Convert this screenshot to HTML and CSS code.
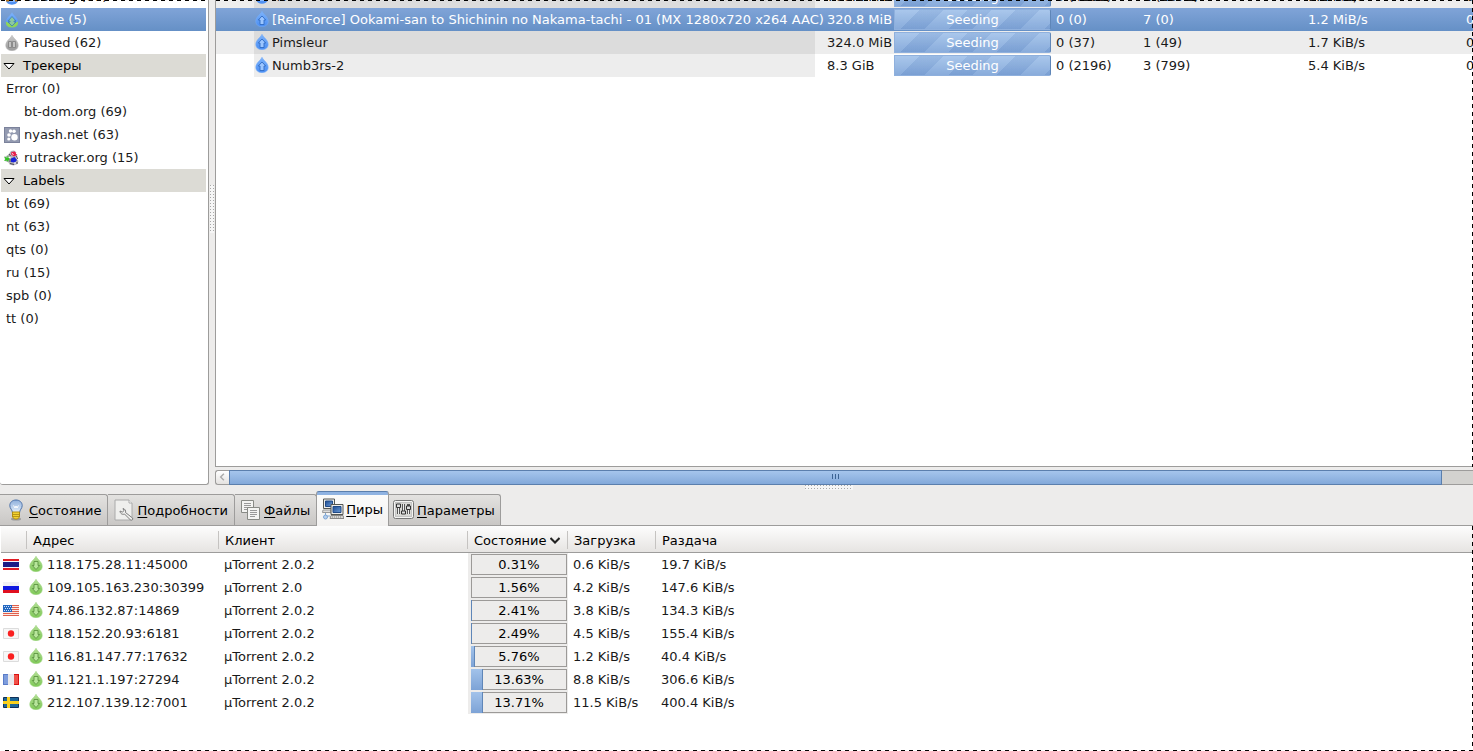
FILE: index.html
```html
<!DOCTYPE html>
<html lang="ru">
<head>
<meta charset="utf-8">
<title>Deluge</title>
<link rel="stylesheet" href="styles.css">
</head>
<body>
<svg class="defs" aria-hidden="true">
  <defs>
    <linearGradient id="blue" x1="0" y1="0" x2="0" y2="1"><stop offset="0" stop-color="#7db3fb"/><stop offset="1" stop-color="#4a8df2"/></linearGradient>
    <linearGradient id="green" x1="0" y1="0" x2="0" y2="1"><stop offset="0" stop-color="#b2dd94"/><stop offset="1" stop-color="#7fc958"/></linearGradient>
    <linearGradient id="grey" x1="0" y1="0" x2="0" y2="1"><stop offset="0" stop-color="#c9c9c9"/><stop offset="1" stop-color="#9a9a9a"/></linearGradient>
    <linearGradient id="bulb" x1="0" y1="0" x2="0" y2="1"><stop offset="0" stop-color="#8fb0dc"/><stop offset="1" stop-color="#e6f0fa"/></linearGradient>
    <linearGradient id="screen" x1="0" y1="0" x2="1" y2="1"><stop offset="0" stop-color="#1d4c92"/><stop offset="1" stop-color="#6b9bd8"/></linearGradient>
    <path id="drop" d="M8 .3C9.500 3.500 14.200 6 14.200 10.300 14.200 13.600 11.500 15.700 8 15.700S1.800 13.600 1.800 10.300C1.800 6 6.500 3.500 8 .3z"/>
  </defs>
  <symbol id="i-up" viewBox="0 0 16 16"><use href="#drop" fill="url(#blue)" stroke="#74adfa" stroke-width=".6"/><path d="M8 5l3.700 4H10v4.500H6V9H4.300z" fill="#9cc6ff" stroke="#2f6bc4" stroke-width=".9"/></symbol>
  <symbol id="i-down" viewBox="0 0 16 16"><use href="#drop" fill="url(#green)" stroke="#9bd47c" stroke-width=".6"/><path d="M8 13.500L4.300 9.500H6v-4h4v4h1.700z" fill="#b7e59b" stroke="#5c9442" stroke-width=".9"/></symbol>
  <symbol id="i-active" viewBox="0 0 16 16"><use href="#drop" fill="url(#blue)"/><path d="M2 9.500l6 3 6-3c.6 4-2 6-6 6s-6.600-2-6-6z" fill="#8fd45a"/><path d="M8 4.500L12 9h-2v1h2l-4 4-4-4h2V9H4z" fill="#8cc8a0" stroke="#3a7cb8" stroke-width=".8"/></symbol>
  <symbol id="i-paused" viewBox="0 0 16 16"><use href="#drop" fill="url(#grey)" stroke="#b4b4b4" stroke-width=".6"/><path d="M4.500 6.500h3v6h-3zM8.500 6.500h3v6h-3z" fill="#c4c4c4" stroke="#808080" stroke-width=".8"/></symbol>
  <symbol id="i-mix" viewBox="0 0 16 16"><use href="#drop" fill="url(#blue)"/><path d="M2 8h12v4.500H2z" fill="#b8741c"/><path d="M5 9.500h6v3.500H5z" fill="#8cbcff"/></symbol>
</svg>

<div class="window">
  <section class="upper">
    <aside class="sidebar">
      <ul class="filters">
        <li class="row"><svg class="ico"><use href="#i-mix"/></svg>Seeding (67)</li>
        <li class="row selected"><svg class="ico"><use href="#i-active"/></svg>Active (5)</li>
        <li class="row"><svg class="ico"><use href="#i-paused"/></svg>Paused (62)</li>
        <li><button class="row group" type="button"><svg class="tri" viewBox="0 0 12 8"><path d="M1 1.500h10L6 7z" fill="#fff" stroke="#000"/></svg>Трекеры</button></li>
        <li class="row">Error (0)</li>
        <li class="row noicon">bt-dom.org (69)</li>
        <li class="row"><svg class="ico" viewBox="0 0 16 16"><path d="M0 0h16v16H0z" fill="#7b829b"/><path d="M1 1h14v14H1z" fill="#939ab0"/><g fill="#fff"><circle cx="10.500" cy="10.300" r="3.200"/><circle cx="5" cy="8" r="1.800"/><circle cx="4.800" cy="12" r="1.600"/><circle cx="6.500" cy="4" r="1.700"/><circle cx="10" cy="4.300" r="1.800"/></g></svg>nyash.net (63)</li>
        <li class="row"><svg class="ico" viewBox="0 0 16 16"><path d="M7 1l3-.5 2 1.500 1.500 3L12 8l2.500 3-1 3-4 1.500-4-1-1-2L1 11l-.5-4L4 5z" fill="#b5b3b9"/><path d="M0 6.500L3.500 8V5.500L5.500 8l-1.500 4-1-1.500L0 11l1.500-2z" fill="#30c520"/><path d="M7.500 2l3.500-.5 2 3.500-3 1.500L7 4.500z" fill="#e8204c"/><path d="M7 8.500l3.500-1.500L13 10l-2 2.500-4-.5z" fill="#1822d8"/><path d="M5 4l1.500 2M6 9v3M12.500 6l1 3M6 13.500l4 1M13 12v2" stroke="#4a4658" fill="none"/><path d="M8 3.500l1.500 1M4.500 7.500h2M10 13h2M12 3.500h1.500" stroke="#fff" fill="none"/></svg>rutracker.org (15)</li>
        <li><button class="row group" type="button"><svg class="tri" viewBox="0 0 12 8"><path d="M1 1.500h10L6 7z" fill="#fff" stroke="#000"/></svg>Labels</button></li>
        <li class="row">bt (69)</li>
        <li class="row">nt (63)</li>
        <li class="row">qts (0)</li>
        <li class="row">ru (15)</li>
        <li class="row">spb (0)</li>
        <li class="row">tt (0)</li>
      </ul>
    </aside>
    <div class="vsplit"><i class="grip"></i></div>
    <main class="main">
      <div class="view">
        <table class="torrents">
          <colgroup><col class="t-num"><col class="t-name"><col class="t-size"><col class="t-bar"><col class="t-seeds"><col class="t-peers"><col class="t-up"><col></colgroup>
          <tbody>
            <tr class="odd"><td></td><td class="name"><svg class="ico"><use href="#i-mix"/></svg>nt</td><td>700.1 MiB</td><td class="barcell"><div class="bar">Seeding</div></td><td>0 (4281)</td><td>1 (1371)</td><td>1.2 KiB/s</td><td class="last">0.0</td></tr>
            <tr class="selected"><td></td><td class="name"><svg class="ico"><use href="#i-up"/></svg>[ReinForce] Ookami-san to Shichinin no Nakama-tachi - 01 (MX 1280x720 x264 AAC)</td><td>320.8 MiB</td><td class="barcell"><div class="bar">Seeding</div></td><td>0 (0)</td><td>7 (0)</td><td>1.2 MiB/s</td><td class="last">0.0</td></tr>
            <tr class="odd"><td></td><td class="name"><svg class="ico"><use href="#i-up"/></svg>Pimsleur</td><td>324.0 MiB</td><td class="barcell"><div class="bar">Seeding</div></td><td>0 (37)</td><td>1 (49)</td><td>1.7 KiB/s</td><td class="last">0.0</td></tr>
            <tr><td></td><td class="name"><svg class="ico"><use href="#i-up"/></svg>Numb3rs-2</td><td>8.3 GiB</td><td class="barcell"><div class="bar">Seeding</div></td><td>0 (2196)</td><td>3 (799)</td><td>5.4 KiB/s</td><td class="last">0.0</td></tr>
          </tbody>
        </table>
      </div>
      <div class="scroll">
        <button class="step" type="button" aria-label="Влево"><svg viewBox="0 0 14 13"><path d="M8.500 3L5 6.500l3.500 3.500" fill="none" stroke="#aaa" stroke-width="1.500"/></svg></button>
        <div class="thumb"><svg viewBox="0 0 8 6"><path d="M.5 0v5M3.500 0v5M6.500 0v5" stroke="#3c6393"/></svg></div>
        <div class="trough"></div>
      </div>
    </main>
    <i class="dash-top-a"></i><i class="dash-top-b"></i><i class="dash-side"></i>
  </section>

  <div class="hsplit"><i class="grip"></i></div>

  <nav class="tabs" role="tablist">
    <button class="tab t1" type="button" role="tab"><svg width="16" height="22" viewBox="0 0 16 22"><ellipse cx="8" cy="20" rx="5" ry="1.500" fill="#999"/><path d="M8 1c3.800 0 6.200 2.500 6.200 5.600 0 3-2.700 4.200-2.700 7.400h-7C4.500 10.800 1.800 9.600 1.800 6.600 1.800 3.500 4.200 1 8 1z" fill="url(#bulb)" stroke="#4a70a8"/><path d="M5.500 6.500L7 9l1-2 1 2 1.500-2.500" fill="none" stroke="#fff"/><path d="M4.500 13h7v5l-2 2h-3l-2-2z" fill="#f2d232" stroke="#b08c10"/><path d="M5 15.500h6M5 17.500h6" stroke="#b89618"/></svg><span><u>С</u>остояние</span></button>
    <button class="tab t2" type="button" role="tab"><svg width="20" height="22" viewBox="0 0 20 22"><path d="M1 1h14l3 3v17H1z" fill="#efefed" stroke="#aaa"/><path d="M15 1v3h3" fill="#fff" stroke="#aaa"/><path d="M9 9.500c2 .5 3 2 2.500 4l7 5.500c1 1.500-.5 2.500-2 2L10.500 15c-2 1-4.500-.5-4.500-3l2.500 1.200 1.300-1.500z" fill="#f0f0ee" stroke="#7d7d7d"/></svg><span><u>П</u>одробности</span></button>
    <button class="tab t3" type="button" role="tab"><svg width="20" height="20" viewBox="0 0 20 20"><path d="M.5.5h12v12H.5z" fill="#f4f4f2" stroke="#888a85"/><path d="M3 3.500h7M3 5.500h7M3 7.500h7M3 9.500h5" stroke="#999"/><path d="M6.500 7.500h12v12h-12z" fill="#f4f4f2" stroke="#888a85"/><path d="M9 10.500h7M9 12.500h7M9 14.500h7M9 16.500h5" stroke="#999"/></svg><span><u>Ф</u>айлы</span></button>
    <button class="tab t4 active" type="button" role="tab" aria-selected="true"><svg width="22" height="22" viewBox="0 0 22 22"><path d="M1.500 1h11v9.500h-11z" fill="#eeeeec" stroke="#555753"/><path d="M3.500 3h7v5.500h-7z" fill="url(#screen)" stroke="#204a87"/><path d="M1 12h8v2.500H.5z" fill="#ddd" stroke="#999"/><path d="M9 6.500h12v10H9z" fill="#eeeeec" stroke="#555753"/><path d="M11 8.500h8v6h-8z" fill="url(#screen)" stroke="#204a87"/><path d="M9 17.500h12l1 3H8z" fill="#d8d8d5" stroke="#888"/><path d="M10 19h10" stroke="#888" stroke-dasharray="1 1"/><path d="M3.500 15v3H8" fill="none" stroke="#7ea6d4"/><circle cx="3.500" cy="19" r="2" fill="#b7d0ee" stroke="#7ea6d4"/></svg><span><u>П</u>иры</span></button>
    <button class="tab t5" type="button" role="tab"><svg width="21" height="20" viewBox="0 0 21 20"><rect x=".5" y=".5" width="20" height="18" rx="2" fill="#f4f4f2" stroke="#777"/><rect x="2.500" y="2.500" width="16" height="14" fill="#d8d8d5" stroke="#c4c4c4"/><path d="M5.500 4v10M10.500 4v10M15.500 4v10" stroke="#555" stroke-width="3"/><path d="M5.500 7v7M10.500 4v7M15.500 9v5" stroke="#eee"/><path d="M3.500 4h4v3.500h-4zM8.500 11h4v3h-4zM13.500 6h4v3.500h-4z" fill="#ddd" stroke="#333"/></svg><span><u>П</u>араметры</span></button>
  </nav>

  <section class="lower">
    <table class="peers">
      <colgroup><col class="p-flag"><col class="p-addr"><col class="p-client"><col class="p-state"><col class="p-down"><col></colgroup>
      <thead><tr><th aria-label="Страна"></th><th>Адрес</th><th>Клиент</th><th>Состояние<svg class="sort" viewBox="0 0 10 7"><path d="M.5 1l4.500 4.500L9.500 1" fill="none" stroke="#222" stroke-width="2"/></svg></th><th>Загрузка</th><th>Раздача</th></tr></thead>
      <tbody>
        <tr><td><svg class="flag" viewBox="0 0 16 11"><path d="M0 0h16v11H0z" fill="#e01c24"/><path d="M0 2h16v7H0z" fill="#f4f4fa"/><path d="M0 3h16v5H0z" fill="#1c1c86"/></svg></td><td><svg class="ico"><use href="#i-down"/></svg>118.175.28.11:45000</td><td>µTorrent 2.0.2</td><td class="state"><div class="meter"><i style="width:0%"></i><span>0.31%</span></div></td><td>0.6 KiB/s</td><td>19.7 KiB/s</td></tr>
        <tr><td><svg class="flag" viewBox="0 0 16 11"><path d="M0 0h16v4H0z" fill="#f0f0f4"/><path d="M0 4h16v4H0z" fill="#1018e0"/><path d="M0 8h16v3H0z" fill="#e01020"/></svg></td><td><svg class="ico"><use href="#i-down"/></svg>109.105.163.230:30399</td><td>µTorrent 2.0</td><td class="state"><div class="meter"><i style="width:0%"></i><span>1.56%</span></div></td><td>4.2 KiB/s</td><td>147.6 KiB/s</td></tr>
        <tr><td><svg class="flag" viewBox="0 0 16 11"><path d="M0 0h16v11H0z" fill="#fbe9e4"/><path d="M0 .5h16M0 2.500h16M0 4.500h16M0 6.500h16M0 8.500h16M0 10.500h16" stroke="#e0604c"/><path d="M0 0h9v7H0z" fill="#2468c0"/><path d="M1 1.500h8M2 3.500h7M1 5.500h8" stroke="#cfe0f8" stroke-dasharray="1 1"/></svg></td><td><svg class="ico"><use href="#i-down"/></svg>74.86.132.87:14869</td><td>µTorrent 2.0.2</td><td class="state"><div class="meter"><i style="width:1%"></i><span>2.41%</span></div></td><td>3.8 KiB/s</td><td>134.3 KiB/s</td></tr>
        <tr><td><svg class="flag" viewBox="0 0 16 11"><path d="M.5.5h15v10H.5z" fill="#f7f7f7" stroke="#dcdcdc"/><circle cx="8" cy="5.500" r="3.200" fill="#fa2020"/></svg></td><td><svg class="ico"><use href="#i-down"/></svg>118.152.20.93:6181</td><td>µTorrent 2.0.2</td><td class="state"><div class="meter"><i style="width:1%"></i><span>2.49%</span></div></td><td>4.5 KiB/s</td><td>155.4 KiB/s</td></tr>
        <tr><td><svg class="flag" viewBox="0 0 16 11"><path d="M.5.5h15v10H.5z" fill="#f7f7f7" stroke="#dcdcdc"/><circle cx="8" cy="5.500" r="3.200" fill="#fa2020"/></svg></td><td><svg class="ico"><use href="#i-down"/></svg>116.81.147.77:17632</td><td>µTorrent 2.0.2</td><td class="state"><div class="meter"><i style="width:4%"></i><span>5.76%</span></div></td><td>1.2 KiB/s</td><td>40.4 KiB/s</td></tr>
        <tr><td><svg class="flag" viewBox="0 0 16 11"><path d="M0 0h16v11H0z" fill="#e8e8ec"/><path d="M0 0h5v11H0z" fill="#7d9cdc"/><path d="M11 0h5v11h-5z" fill="#f05048"/><path d="M.5 0v11M0 .5h5M0 10.500h5" stroke="#5a7cc8"/><path d="M15.500 0v11M11 .5h5M11 10.500h5" stroke="#d81010"/></svg></td><td><svg class="ico"><use href="#i-down"/></svg>91.121.1.197:27294</td><td>µTorrent 2.0.2</td><td class="state"><div class="meter"><i style="width:13%"></i><span>13.63%</span></div></td><td>8.8 KiB/s</td><td>306.6 KiB/s</td></tr>
        <tr><td><svg class="flag" viewBox="0 0 16 11"><path d="M.5.5h15v10H.5z" fill="#1c6698" stroke="#103058"/><path d="M4 0h3v11H4zM0 4h16v3H0z" fill="#fad01c"/></svg></td><td><svg class="ico"><use href="#i-down"/></svg>212.107.139.12:7001</td><td>µTorrent 2.0.2</td><td class="state"><div class="meter"><i style="width:13%"></i><span>13.71%</span></div></td><td>11.5 KiB/s</td><td>400.4 KiB/s</td></tr>
      </tbody>
    </table>
    <i class="dash-bottom"></i><i class="dash-side"></i>
  </section>
</div>
</body>
</html>
```
FILE: styles.css
```css
* { box-sizing: border-box; }
body {
  margin: 0;
  font: 13px/23px "DejaVu Sans", sans-serif;
  color: #1a1a1a;
  background: #edeceb;
}
button { font: inherit; color: #000; border: 0; background: none; padding: 0; margin: 0; text-align: left; }
svg { flex: none; display: block; }
.defs { position: absolute; width: 0; height: 0; }
.window { height: 100vh; display: flex; flex-direction: column; overflow: hidden; }
.upper { flex: 1; min-height: 0; display: flex; position: relative; }

/* Filter sidebar */
.sidebar {
  width: 209px;
  flex: none;
  background: #fff;
  border: solid #9d9c9b;
  border-width: 0 1px 1px 0;
  border-radius: 0 0 3px 3px;
  padding: 0 2px 0 1px;
  overflow: hidden;
}
.filters { list-style: none; margin: -15px 0 0; padding: 0; }
.row { height: 23px; display: flex; align-items: center; padding-left: 5px; width: 100%; white-space: nowrap; }
.ico { width: 16px; height: 16px; }
.row .ico { margin: 0 4px 0 -2px; }
.noicon { padding-left: 23px; }
.group { background: #dcdbd5; padding-left: 2px; }
.tri { width: 12px; height: 8px; margin-right: 8px; }
.selected { background: linear-gradient(#80a4d8, #6590c6); color: #fff; }

/* Pane splitters */
.vsplit { width: 6px; flex: none; display: flex; align-items: center; padding: 0 0 66px 1px; }
.grip { display: block; background: linear-gradient(#aaa, #aaa) 0 0 / 1px 1px, #f6f6f6; background: conic-gradient(from 0deg at 1px 1px, #f6f6f6 0 270deg, #a8a8a8 270deg) 0 0 / 3px 3px; }
.vsplit .grip { width: 4px; height: 48px; }
.hsplit { height: 6px; flex: none; display: flex; justify-content: center; padding-left: 185px; }
.hsplit .grip { width: 48px; height: 5px; }

/* Torrent list */
.main { flex: 1; min-width: 0; display: flex; flex-direction: column; }
.view { flex: 1; min-height: 0; background: #fff; border: solid #9d9c9b; border-width: 0 0 1px 1px; overflow: hidden; }
table { border-collapse: collapse; table-layout: fixed; width: 100%; }
td, th { padding: 0; height: 23px; text-align: left; white-space: nowrap; font-weight: normal; }
.torrents { margin-top: -15px; }
.t-num { width: 38px; }
.t-name { width: 561px; }
.t-size { width: 79px; }
.t-bar { width: 158px; }
.t-seeds { width: 87px; }
.t-peers { width: 165px; }
.t-up { width: 158px; }
.torrents td { padding-left: 4px; }
.torrents td:nth-child(3) { padding-left: 12px; }
.torrents td.name { padding-left: 0; background: #ededed; }
.name .ico { float: left; margin: 3px 2px 0 0; }
.odd { background: #ededed; }
.torrents .odd .name { background: #dcdcdc; }
.torrents .selected .name { background: none; }
.torrents td.barcell { padding: 0 1px 0 0; }
.torrents td.last { overflow: hidden; text-overflow: clip; }
.bar {
  height: 21px;
  line-height: 19px;
  text-align: center;
  color: #fff;
  border: 1px solid #8fb0dd;
  border-right: 1px solid #5f86b8;
  border-radius: 0 2px 2px 0;
  background:
    repeating-linear-gradient(135deg, rgba(255,255,255,.08) 0 17px, rgba(60,90,150,.08) 17px 34px),
    linear-gradient(#a2c2ea, #7fa5d8);
}

/* Horizontal scrollbar */
.scroll { height: 18px; padding-top: 3px; display: flex; }
.step { width: 14px; border: 1px solid #9d9c9b; border-right: 0; border-radius: 3px 0 0 3px; background: linear-gradient(#fff, #e4e2e0); }
.thumb {
  flex: 1;
  display: flex;
  align-items: center;
  justify-content: center;
  border: 1px solid #5b7fad;
  background: linear-gradient(#a5c5ec, #83a9da);
}
.thumb svg { width: 8px; height: 6px; }
.trough { width: 31px; border: solid #9d9c9b; border-width: 1px 0; background: #d3d2cf; }

/* Tabs */
.tabs { flex: none; height: 35px; display: flex; align-items: flex-end; border-bottom: 1px solid #9d9c9b; }
.tab {
  height: 31px;
  display: flex;
  align-items: center;
  gap: 3px;
  border: solid #9d9c9b;
  border-width: 1px 1px 0 0;
  border-radius: 0 3px 0 0;
  background: linear-gradient(#e3e2e0, #c9c7c5);
}
.tab u { text-underline-offset: 2px; }
.tab span { padding-top: 2px; }
.t1 { padding: 0 6px 0 8px; gap: 5px; }
.t2 { padding: 0 6px; }
.t3 { padding: 0 6px; }
.t4 { padding: 0 5px; }
.t5 { padding: 0 5px 0 4px; }
.tab.active {
  height: 35px;
  margin: 0 0 -1px -1px;
  gap: 2px;
  border: 1px solid #9d9c9b;
  border-top: 1px solid #5b7fad;
  border-bottom: 0;
  border-radius: 3px 3px 0 0;
  background: linear-gradient(#8fb3e2 0 3px, #fbfbfa 3px, #f3f2f1);
}

/* Peers */
.lower { flex: none; position: relative; background: #fff; padding: 0 0 37px 1px; }
.p-flag { width: 26px; }
.p-addr { width: 192px; }
.p-client { width: 249px; }
.p-state { width: 100px; }
.p-down { width: 88px; }
.peers th {
  height: 27px;
  padding: 3px 0 0 6px;
  border-bottom: 1px solid #9d9c9b;
  color: #000;
  background: linear-gradient(#c5c3c1, #c5c3c1) right 60% / 1px 18px no-repeat, linear-gradient(#fdfdfd, #e6e4e2);
}
.peers th:last-child { background: linear-gradient(#fdfdfd, #e6e4e2); }
.sort { display: inline-block; width: 10px; height: 7px; margin-left: 4px; vertical-align: 1px; }
.peers td { padding-left: 5px; }
.peers td:first-child { padding-left: 2px; }
.peers td:nth-child(2) { padding-left: 1px; }
.peers td .ico { float: left; margin: 3px 3px 0 0; }
.flag { width: 16px; height: 11px; }
.peers td.state { background: #edeceb; padding: 0 1px 0 3px; }
.meter { position: relative; height: 21px; line-height: 19px; border: 1px solid #9c9a98; text-align: center; color: #000; }
.meter i { position: absolute; inset: -1px auto -1px -1px; border-right: 1px solid #5f86b8; background: linear-gradient(#a2c2ea, #7da3d6); }
.meter i[style="width:0%"] { display: none; }
.meter span { position: relative; }

/* Dashed focus outlines */
.dash-top-a, .dash-top-b, .dash-bottom, .dash-side { position: absolute; }
.dash-top-a, .dash-top-b, .dash-bottom { height: 1px; background: repeating-linear-gradient(90deg, #000 0 4px, transparent 4px 8px); }
.dash-top-a { top: 0; left: 1px; width: 205px; }
.dash-top-b { top: 0; left: 216px; right: 0; }
.dash-bottom { bottom: 0; left: 5px; right: 0; }
.dash-side { right: 0; top: 0; bottom: 0; width: 1px; background: repeating-linear-gradient(#000 0 4px, transparent 4px 8px); }
.upper .dash-side { bottom: 18px; }
```
